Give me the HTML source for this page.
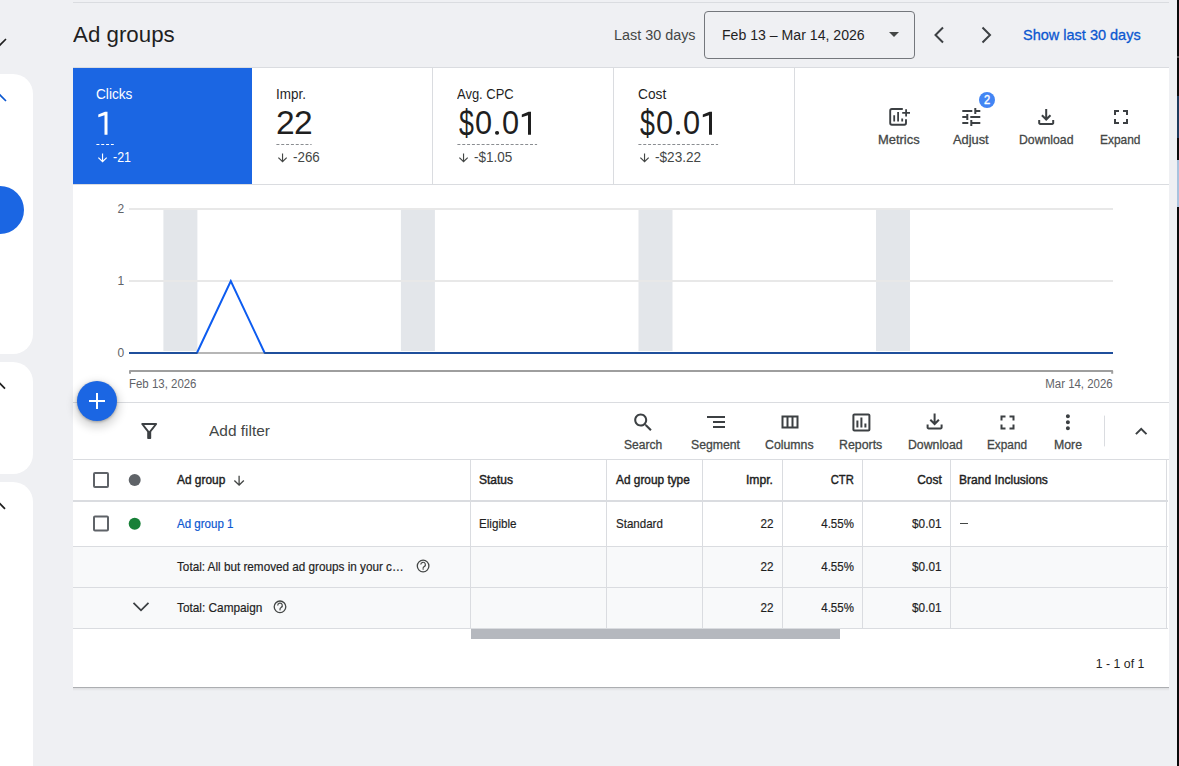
<!DOCTYPE html><html><head><meta charset="utf-8"><style>
*{margin:0;padding:0;box-sizing:border-box}
html,body{width:1179px;height:766px;overflow:hidden;background:#eff0f3;font-family:"Liberation Sans", sans-serif;position:relative}
.t{position:absolute;white-space:nowrap}
.a{position:absolute}
svg{position:absolute;overflow:visible}
</style></head><body>
<div class='a' style='left:-20px;top:74px;width:53px;height:280px;background:#fff;border-radius:20px'></div>
<div class='a' style='left:-20px;top:362px;width:53px;height:112px;background:#fff;border-radius:20px'></div>
<div class='a' style='left:-20px;top:482px;width:53px;height:320px;background:#fff;border-radius:20px'></div>
<div class='a' style='left:-24px;top:186px;width:48px;height:48px;background:#1b66e3;border-radius:50%'></div>
<svg style='left:0;top:0' width='40' height='766'><path d='M-6 39 L0 45 L6 39' fill='none' stroke='#1f1f1f' stroke-width='1.6'/><path d='M-6 101 L0 95 L6 101' fill='none' stroke='#0b57d0' stroke-width='1.6'/><path d='M-5 388.6 L0 383.6 L5 388.6' fill='none' stroke='#1f1f1f' stroke-width='1.8'/><path d='M-5 508.8 L0 503.8 L5 508.8' fill='none' stroke='#1f1f1f' stroke-width='1.8'/></svg>
<div class='a' style='left:1177px;top:0;width:2px;height:766px;background:#0a0a0a'></div>
<div class='a' style='left:1177px;top:56px;width:2px;height:2px;background:#555'></div>
<div class='a' style='left:1177px;top:96px;width:2px;height:42px;background:#1d3a5c'></div>
<div class='a' style='left:1177px;top:160px;width:2px;height:47px;background:#a9c3de'></div>
<div class='a' style='left:73px;top:2px;width:1096px;height:1px;background:#dadce0'></div>
<div class='t' style='left:73.00px;transform-origin:0 0;top:23.88px;font-size:22px;line-height:22px;color:#1f1f1f;font-weight:400;transform:scaleX(1.0140);'>Ad groups</div>
<div class='t' style='left:614.00px;transform-origin:0 0;top:28.45px;font-size:14px;line-height:14px;color:#444746;font-weight:400;transform:scaleX(1.0266);'>Last 30 days</div>
<div class='a' style='left:704px;top:11px;width:211px;height:48px;border:1px solid #74777c;border-radius:4px'></div>
<div class='t' style='left:722.00px;transform-origin:0 0;top:28.45px;font-size:14px;line-height:14px;color:#1f1f1f;font-weight:400;transform:scaleX(1.0074);'>Feb 13 – Mar 14, 2026</div>
<svg style='left:889px;top:32px' width='10' height='5'><path d='M0 0H10L5 5Z' fill='#444746'/></svg>
<svg style='left:930px;top:25px' width='70' height='20'><path d='M13 2.5 L5.5 10 L13 17.5' fill='none' stroke='#3c4043' stroke-width='2'/><path d='M52.5 2.5 L60 10 L52.5 17.5' fill='none' stroke='#3c4043' stroke-width='2'/></svg>
<div class='t' style='left:1022.80px;transform-origin:0 0;top:28.13px;font-size:14.5px;line-height:14.5px;color:#0b57d0;font-weight:400;transform:scaleX(1.0001);-webkit-text-stroke:0.3px #0b57d0'>Show last 30 days</div>
<div class='a' style='left:73px;top:67px;width:1096px;height:620px;background:#fff;'></div>
<div class='a' style='left:73px;top:687px;width:1096px;height:1px;background:#acaeb1'></div><div class='a' style='left:73px;top:688px;width:1096px;height:3px;background:linear-gradient(rgba(0,0,0,.08),rgba(0,0,0,0))'></div>
<div class='a' style='left:73px;top:67px;width:1096px;height:1px;background:#dadce0'></div>
<div class='a' style='left:73px;top:184px;width:1096px;height:1px;background:#dadce0'></div>
<div class='a' style='left:432px;top:67px;width:1px;height:118px;background:#dadce0'></div>
<div class='a' style='left:613px;top:67px;width:1px;height:118px;background:#dadce0'></div>
<div class='a' style='left:794px;top:67px;width:1px;height:118px;background:#dadce0'></div>
<div class='a' style='left:73px;top:68px;width:179px;height:116px;background:#1b66e3'></div>
<div class='t' style='left:96.00px;transform-origin:0 0;top:86.75px;font-size:14px;line-height:14px;color:#fff;font-weight:400;transform:scaleX(0.9747);'>Clicks</div>
<svg style='left:0;top:0' width='200' height='200'><path d='M107.5 111.8V134.7H104.5V115.3L98.3 117.2V114.5L105 111.8Z' fill='#fff'/></svg>
<svg style='left:96px;top:143px' width='17.8' height='3'><line x1='0.4' x2='17.8' y1='1.5' y2='1.5' stroke='#fff' stroke-width='1' stroke-dasharray='3 1.84'/></svg>
<svg style='left:0;top:0' width='800' height='200'><path transform='translate(95.7 151.1) scale(0.57)' d='M20 12l-1.41-1.41L13 16.17V4h-2v12.17l-5.58-5.59L4 12l8 8 8-8z' fill='#fff'/></svg>
<div class='t' style='left:113.00px;transform-origin:0 0;top:150.45px;font-size:14px;line-height:14px;color:#fff;font-weight:400;transform:scaleX(0.8896);'>-21</div>
<div class='t' style='left:276.00px;transform-origin:0 0;top:86.75px;font-size:14px;line-height:14px;color:#1f1f1f;font-weight:400;transform:scaleX(0.9606);'>Impr.</div>
<div class='t' style='left:275.82px;top:107.20px;font-size:32.6px;line-height:32.6px;color:#1f1f1f;transform:scaleX(1.0315);transform-origin:0 0'>2</div>
<div class='t' style='left:293.82px;top:107.20px;font-size:32.6px;line-height:32.6px;color:#1f1f1f;transform:scaleX(1.0315);transform-origin:0 0'>2</div>
<svg style='left:276px;top:143px' width='35.6' height='3'><line x1='0.4' x2='35.6' y1='1.5' y2='1.5' stroke='#8a8d91' stroke-width='1' stroke-dasharray='3 1.84'/></svg>
<svg style='left:0;top:0' width='800' height='200'><path transform='translate(275.7 151.1) scale(0.57)' d='M20 12l-1.41-1.41L13 16.17V4h-2v12.17l-5.58-5.59L4 12l8 8 8-8z' fill='#444746'/></svg>
<div class='t' style='left:293.00px;transform-origin:0 0;top:150.45px;font-size:14px;line-height:14px;color:#444746;font-weight:400;transform:scaleX(0.9561);'>-266</div>
<div class='t' style='left:457.00px;transform-origin:0 0;top:86.75px;font-size:14px;line-height:14px;color:#1f1f1f;font-weight:400;transform:scaleX(0.9262);'>Avg. CPC</div>
<div class='t' style='left:458.63px;top:106.13px;font-size:36.7px;line-height:36.7px;color:#1f1f1f;transform:scaleX(0.7300);transform-origin:0 0'>$</div>
<div class='t' style='left:475.27px;top:107.33px;font-size:32.8px;line-height:32.8px;color:#1f1f1f;transform:scaleX(0.9371);transform-origin:0 0'>0</div>
<div class='t' style='left:501.77px;top:107.33px;font-size:32.8px;line-height:32.8px;color:#1f1f1f;transform:scaleX(0.9371);transform-origin:0 0'>0</div>
<svg style='left:0;top:0' width='800' height='200'><rect x='495.0' y='131' width='4.1' height='3.8' rx='1.8' fill='#1f1f1f'/><path transform='translate(423.5 0)' d='M107.5 111.8V134.7H104.5V115.3L98.3 117.2V114.5L105 111.8Z' fill='#1f1f1f'/></svg>
<svg style='left:457px;top:143px' width='80.1' height='3'><line x1='0.4' x2='80.1' y1='1.5' y2='1.5' stroke='#8a8d91' stroke-width='1' stroke-dasharray='3 1.84'/></svg>
<svg style='left:0;top:0' width='800' height='200'><path transform='translate(456.7 151.1) scale(0.57)' d='M20 12l-1.41-1.41L13 16.17V4h-2v12.17l-5.58-5.59L4 12l8 8 8-8z' fill='#444746'/></svg>
<div class='t' style='left:474.00px;transform-origin:0 0;top:150.45px;font-size:14px;line-height:14px;color:#444746;font-weight:400;transform:scaleX(0.9647);'>-$1.05</div>
<div class='t' style='left:638.00px;transform-origin:0 0;top:86.75px;font-size:14px;line-height:14px;color:#1f1f1f;font-weight:400;transform:scaleX(0.9793);'>Cost</div>
<div class='t' style='left:639.63px;top:106.13px;font-size:36.7px;line-height:36.7px;color:#1f1f1f;transform:scaleX(0.7300);transform-origin:0 0'>$</div>
<div class='t' style='left:656.27px;top:107.33px;font-size:32.8px;line-height:32.8px;color:#1f1f1f;transform:scaleX(0.9371);transform-origin:0 0'>0</div>
<div class='t' style='left:682.77px;top:107.33px;font-size:32.8px;line-height:32.8px;color:#1f1f1f;transform:scaleX(0.9371);transform-origin:0 0'>0</div>
<svg style='left:0;top:0' width='800' height='200'><rect x='676.0' y='131' width='4.1' height='3.8' rx='1.8' fill='#1f1f1f'/><path transform='translate(604.5 0)' d='M107.5 111.8V134.7H104.5V115.3L98.3 117.2V114.5L105 111.8Z' fill='#1f1f1f'/></svg>
<svg style='left:638px;top:143px' width='80.1' height='3'><line x1='0.4' x2='80.1' y1='1.5' y2='1.5' stroke='#8a8d91' stroke-width='1' stroke-dasharray='3 1.84'/></svg>
<svg style='left:0;top:0' width='800' height='200'><path transform='translate(637.7 151.1) scale(0.57)' d='M20 12l-1.41-1.41L13 16.17V4h-2v12.17l-5.58-5.59L4 12l8 8 8-8z' fill='#444746'/></svg>
<div class='t' style='left:655.00px;transform-origin:0 0;top:150.45px;font-size:14px;line-height:14px;color:#444746;font-weight:400;transform:scaleX(0.9708);'>-$23.22</div>
<svg style='left:0;top:0' width='1179' height='200'><path d='M902.8 109 H891.9 Q890.2 109 890.2 110.7 V123.1 Q890.2 124.8 891.9 124.8 H904.3 Q906 124.8 906 123.1 V119.2' fill='none' stroke='#3c4043' stroke-width='1.9'/><path d='M894.2 115.3V121.5 M898.1 112.1V121.5 M902.2 118.4V121.5 M902.2 112.9H910 M906.1 109.2V116.6' fill='none' stroke='#3c4043' stroke-width='1.8'/><path transform='translate(959.3 104.9) scale(1.0)' d='M3 17v2h6v-2H3zM3 5v2h10V5H3zm10 16v-2h8v-2h-8v-2h-2v6h2zM7 9v2H3v2h4v2h2V9H7zm14 4v-2H11v2h10zm-6-4h2V7h4V5h-4V3h-2v6z' fill='#3c4043'/><path transform='translate(1034.2 104.9) scale(1.0)' d='M12 16 7 11l1.4-1.45 2.6 2.6V4h2v8.15l2.6-2.6L17 11zm-6 4q-.825 0-1.412-.587Q4 18.825 4 18v-3h2v3h12v-3h2v3q0 .825-.587 1.413Q18.825 20 18 20z' fill='#3c4043'/><path transform='translate(1109 105) scale(1.0)' d='M7 14H5v5h5v-2H7v-3zm-2-4h2V7h3V5H5v5zm12 7h-3v2h5v-5h-2v3zM14 5v2h3v3h2V5h-5z' fill='#3c4043'/></svg>
<div class='a' style='left:979.3px;top:91.75px;width:16px;height:16px;border-radius:50%;background:#4285f4'></div>
<div class='t' style='left:984.20px;transform-origin:0 0;top:94.14px;font-size:12px;line-height:12px;color:#fff;font-weight:400;transform:scaleX(0.9271);-webkit-text-stroke:0.4px #fff'>2</div>
<div class='t' style='left:878.30px;transform-origin:0 0;top:133.20px;font-size:13px;line-height:13px;color:#444746;font-weight:400;transform:scaleX(0.9931);-webkit-text-stroke:0.3px currentColor;'>Metrics</div>
<div class='t' style='left:953.10px;transform-origin:0 0;top:133.20px;font-size:13px;line-height:13px;color:#444746;font-weight:400;transform:scaleX(0.9878);-webkit-text-stroke:0.3px currentColor;'>Adjust</div>
<div class='t' style='left:1018.50px;transform-origin:0 0;top:133.20px;font-size:13px;line-height:13px;color:#444746;font-weight:400;transform:scaleX(0.9424);-webkit-text-stroke:0.3px currentColor;'>Download</div>
<div class='t' style='left:1100.40px;transform-origin:0 0;top:133.20px;font-size:13px;line-height:13px;color:#444746;font-weight:400;transform:scaleX(0.9162);-webkit-text-stroke:0.3px currentColor;'>Expand</div>
<svg style='left:0;top:0' width='1179' height='766'><rect x='163.4' y='210' width='34' height='141' fill='#e3e6ea'/><rect x='400.9' y='210' width='34' height='141' fill='#e3e6ea'/><rect x='638.5' y='210' width='34' height='141' fill='#e3e6ea'/><rect x='876.0' y='210' width='34' height='141' fill='#e3e6ea'/><rect x='129' y='208' width='984' height='2' fill='#e8e8e8'/><rect x='129' y='280' width='984' height='2' fill='#e8e8e8'/><line x1='129' x2='1113' y1='353' y2='353' stroke='#9e9e9e' stroke-width='1.6'/><path d='M130 373.8 V371 H1112.2 V373.8' fill='none' stroke='#9e9e9e' stroke-width='2' stroke-linejoin='round'/><polyline points='196.9,353 230.8,281 264.7,353' fill='none' stroke='#0d5cf0' stroke-width='2' stroke-linejoin='miter'/><path d='M129 353 H197.4 M264.2 353 H1113' fill='none' stroke='#1f4f9c' stroke-width='2'/></svg>
<div class='t' style='left:117.60px;transform-origin:0 0;top:202.84px;font-size:12px;line-height:12px;color:#5f6368;font-weight:400;'>2</div>
<div class='t' style='left:117.60px;transform-origin:0 0;top:274.84px;font-size:12px;line-height:12px;color:#5f6368;font-weight:400;'>1</div>
<div class='t' style='left:117.60px;transform-origin:0 0;top:346.84px;font-size:12px;line-height:12px;color:#5f6368;font-weight:400;'>0</div>
<div class='t' style='left:128.70px;transform-origin:0 0;top:377.54px;font-size:12px;line-height:12px;color:#5f6368;font-weight:400;transform:scaleX(0.9543);'>Feb 13, 2026</div>
<div class='t' style='right:66.00px;transform-origin:100% 0;top:377.54px;font-size:12px;line-height:12px;color:#5f6368;font-weight:400;transform:scaleX(0.9545);'>Mar 14, 2026</div>
<div class='a' style='left:73px;top:402px;width:1096px;height:1px;background:#dadce0'></div>
<div class='a' style='left:73px;top:459px;width:1096px;height:1px;background:#dadce0'></div>
<div class='a' style='left:77px;top:381px;width:40px;height:40px;border-radius:50%;background:#1b66e3;box-shadow:0 1px 3px rgba(0,0,0,.3),0 4px 8px 3px rgba(0,0,0,.15)'></div>
<svg style='left:0;top:0' width='1179' height='766'><path d='M89 401H105 M97 393V409' stroke='#fff' stroke-width='2'/><path transform='translate(137.2 419) scale(1.0)' d='M7 6h10l-5.01 6.3L7 6zm-2.75-.39C6.27 8.2 10 13 10 13v6c0 .55.45 1 1 1h2c.55 0 1-.45 1-1v-6s3.72-4.8 5.74-7.39c.51-.66.04-1.61-.79-1.61H5.04c-.83 0-1.3.95-.79 1.61z' fill='#3c4043'/><path transform='translate(631.2 410.5) scale(1.0)' d='M15.5 14h-.79l-.28-.27C15.41 12.59 16 11.11 16 9.5 16 5.91 13.09 3 9.5 3S3 5.910 3 9.5 5.91 16 9.5 16c1.61 0 3.09-.59 4.23-1.57l.27.28v.79l5 4.99L20.49 19l-4.99-5zm-6 0C7.01 14 5 11.99 5 9.5S7.01 5 9.5 5 14 7.01 14 9.5 11.99 14 9.5 14z' fill='#3c4043'/><path transform='translate(704 410.1) scale(1.0)' d='M9 18h12v-2H9v2zM3 6v2h18V6H3zm6 7h12v-2H9v2z' fill='#3c4043'/><path transform='translate(777.5 410.5) scale(1.0)' d='M4 5v13h17V5H4zm10 2v9h-3V7h3zM6 7h3v9H6V7zm13 9h-3V7h3v9z' fill='#3c4043'/><path transform='translate(849.4 410.4) scale(1.0)' d='M9 17H7v-7h2v7zm4 0h-2V7h2v10zm4 0h-2v-4h2v4zm2 2H5V5h14v14zm0-16H5c-1.1 0-2 .9-2 2v14c0 1.1.9 2 2 2h14c1.1 0 2-.9 2-2V5c0-1.1-.9-2-2-2z' fill='#3c4043'/><path transform='translate(922.6 409.4) scale(1.0)' d='M12 16 7 11l1.4-1.45 2.6 2.6V4h2v8.15l2.6-2.6L17 11zm-6 4q-.825 0-1.412-.587Q4 18.825 4 18v-3h2v3h12v-3h2v3q0 .825-.587 1.413Q18.825 20 18 20z' fill='#3c4043'/><path transform='translate(995.5 410.5) scale(1.0)' d='M7 14H5v5h5v-2H7v-3zm-2-4h2V7h3V5H5v5zm12 7h-3v2h5v-5h-2v3zM14 5v2h3v3h2V5h-5z' fill='#3c4043'/><path transform='translate(1055.9 410.2) scale(1.0)' d='M12 8c1.1 0 2-.9 2-2s-.9-2-2-2-2 .9-2 2 .9 2 2 2zm0 2c-1.1 0-2 .9-2 2s.9 2 2 2 2-.9 2-2-.9-2-2-2zm0 6c-1.1 0-2 .9-2 2s.9 2 2 2 2-.9 2-2-.9-2-2-2z' fill='#3c4043'/><path d='M1104.5 415.6V446.4' stroke='#dadce0' stroke-width='1'/><path transform='translate(1129.2 419.4) scale(1.0)' d='M12 8l-6 6 1.41 1.41L12 10.83l4.59 4.58L18 14z' fill='#3c4043'/></svg>
<div class='t' style='left:208.90px;transform-origin:0 0;top:423.30px;font-size:15px;line-height:15px;color:#444746;font-weight:400;transform:scaleX(1.0304);'>Add filter</div>
<div class='t' style='left:624.00px;transform-origin:0 0;top:439.22px;font-size:12.5px;line-height:12.5px;color:#444746;font-weight:400;transform:scaleX(0.9644);-webkit-text-stroke:0.3px currentColor;'>Search</div>
<div class='t' style='left:691.20px;transform-origin:0 0;top:439.22px;font-size:12.5px;line-height:12.5px;color:#444746;font-weight:400;transform:scaleX(0.9794);-webkit-text-stroke:0.3px currentColor;'>Segment</div>
<div class='t' style='left:765.20px;transform-origin:0 0;top:439.22px;font-size:12.5px;line-height:12.5px;color:#444746;font-weight:400;transform:scaleX(0.9852);-webkit-text-stroke:0.3px currentColor;'>Columns</div>
<div class='t' style='left:839.00px;transform-origin:0 0;top:439.22px;font-size:12.5px;line-height:12.5px;color:#444746;font-weight:400;transform:scaleX(0.9890);-webkit-text-stroke:0.3px currentColor;'>Reports</div>
<div class='t' style='left:907.50px;transform-origin:0 0;top:439.22px;font-size:12.5px;line-height:12.5px;color:#444746;font-weight:400;transform:scaleX(0.9821);-webkit-text-stroke:0.3px currentColor;'>Download</div>
<div class='t' style='left:987.30px;transform-origin:0 0;top:439.22px;font-size:12.5px;line-height:12.5px;color:#444746;font-weight:400;transform:scaleX(0.9433);-webkit-text-stroke:0.3px currentColor;'>Expand</div>
<div class='t' style='left:1053.90px;transform-origin:0 0;top:439.22px;font-size:12.5px;line-height:12.5px;color:#444746;font-weight:400;transform:scaleX(0.9830);-webkit-text-stroke:0.3px currentColor;'>More</div>
<div class='a' style='left:73px;top:546px;width:1094px;height:82px;background:#f8f9fa'></div>
<div class='a' style='left:73px;top:500px;width:1095px;height:2px;background:#dadce0'></div>
<div class='a' style='left:73px;top:546px;width:1095px;height:1px;background:#dadce0'></div>
<div class='a' style='left:73px;top:587px;width:1095px;height:1px;background:#dadce0'></div>
<div class='a' style='left:73px;top:628px;width:1095px;height:1px;background:#dadce0'></div>
<div class='a' style='left:470px;top:459px;width:1px;height:169px;background:#dadce0'></div>
<div class='a' style='left:606px;top:459px;width:1px;height:169px;background:#dadce0'></div>
<div class='a' style='left:702px;top:459px;width:1px;height:169px;background:#dadce0'></div>
<div class='a' style='left:782px;top:459px;width:1px;height:169px;background:#dadce0'></div>
<div class='a' style='left:862px;top:459px;width:1px;height:169px;background:#dadce0'></div>
<div class='a' style='left:950px;top:459px;width:1px;height:169px;background:#dadce0'></div>
<div class='a' style='left:1166px;top:459px;width:1px;height:169px;background:#dadce0'></div>
<svg style='left:0;top:0' width='1179' height='766'><rect x='94' y='473' width='14' height='14' rx='1' fill='none' stroke='#5f6368' stroke-width='2'/><rect x='94' y='516.5' width='14' height='14' rx='1' fill='none' stroke='#5f6368' stroke-width='2'/><circle cx='134.7' cy='480' r='6' fill='#5f6368'/><circle cx='134.7' cy='523.8' r='6' fill='#188038'/><path transform='translate(231.3 473.1) scale(0.65)' d='M20 12l-1.41-1.41L13 16.17V4h-2v12.17l-5.58-5.59L4 12l8 8 8-8z' fill='#444746'/><path d='M133.5 602.8L141 610.3L148.5 602.8' fill='none' stroke='#3c4043' stroke-width='1.8'/><circle cx='423.1' cy='566' r='5.8' fill='none' stroke='#444746' stroke-width='1.3'/><circle cx='280' cy='606.8' r='5.8' fill='none' stroke='#444746' stroke-width='1.3'/></svg>
<svg style='left:0;top:0' width='1179' height='766'><path d='M420.8 564.6 a2.3 2.3 0 1 1 3.4 2 c-0.75 0.45 -1.1 0.8 -1.1 1.7' fill='none' stroke='#444746' stroke-width='1.2'/><circle cx='423.1' cy='569.0' r='0.75' fill='#444746'/><path d='M277.7 605.4 a2.3 2.3 0 1 1 3.4 2 c-0.75 0.45 -1.1 0.8 -1.1 1.7' fill='none' stroke='#444746' stroke-width='1.2'/><circle cx='280.0' cy='609.8' r='0.75' fill='#444746'/></svg>
<div class='t' style='left:177.40px;transform-origin:0 0;top:473.40px;font-size:13px;line-height:13px;color:#1f1f1f;font-weight:400;transform:scaleX(0.9154);-webkit-text-stroke:0.45px currentColor;'>Ad group</div>
<div class='t' style='left:479.40px;transform-origin:0 0;top:473.40px;font-size:13px;line-height:13px;color:#1f1f1f;font-weight:400;transform:scaleX(0.9224);-webkit-text-stroke:0.45px currentColor;'>Status</div>
<div class='t' style='left:615.50px;transform-origin:0 0;top:473.40px;font-size:13px;line-height:13px;color:#1f1f1f;font-weight:400;transform:scaleX(0.9116);-webkit-text-stroke:0.45px currentColor;'>Ad group type</div>
<div class='t' style='right:405.80px;transform-origin:100% 0;top:473.40px;font-size:13px;line-height:13px;color:#1f1f1f;font-weight:400;transform:scaleX(0.9341);-webkit-text-stroke:0.45px currentColor;'>Impr.</div>
<div class='t' style='right:325.30px;transform-origin:100% 0;top:473.40px;font-size:13px;line-height:13px;color:#1f1f1f;font-weight:400;transform:scaleX(0.8608);-webkit-text-stroke:0.45px currentColor;'>CTR</div>
<div class='t' style='right:237.10px;transform-origin:100% 0;top:473.40px;font-size:13px;line-height:13px;color:#1f1f1f;font-weight:400;transform:scaleX(0.9164);-webkit-text-stroke:0.45px currentColor;'>Cost</div>
<div class='t' style='left:959.30px;transform-origin:0 0;top:473.40px;font-size:13px;line-height:13px;color:#1f1f1f;font-weight:400;transform:scaleX(0.9248);-webkit-text-stroke:0.45px currentColor;'>Brand Inclusions</div>
<div class='t' style='left:177.40px;transform-origin:0 0;top:517.30px;font-size:13px;line-height:13px;color:#0b57d0;font-weight:400;transform:scaleX(0.8882);-webkit-text-stroke:0.2px currentColor;'>Ad group 1</div>
<div class='t' style='left:479.40px;transform-origin:0 0;top:517.30px;font-size:13px;line-height:13px;color:#1f1f1f;font-weight:400;transform:scaleX(0.8945);-webkit-text-stroke:0.2px currentColor;'>Eligible</div>
<div class='t' style='left:615.50px;transform-origin:0 0;top:517.30px;font-size:13px;line-height:13px;color:#1f1f1f;font-weight:400;transform:scaleX(0.8888);-webkit-text-stroke:0.2px currentColor;'>Standard</div>
<div class='t' style='right:405.80px;transform-origin:100% 0;top:517.30px;font-size:13px;line-height:13px;color:#1f1f1f;font-weight:400;transform:scaleX(0.8985);-webkit-text-stroke:0.2px currentColor;'>22</div>
<div class='t' style='right:325.30px;transform-origin:100% 0;top:517.30px;font-size:13px;line-height:13px;color:#1f1f1f;font-weight:400;transform:scaleX(0.8841);-webkit-text-stroke:0.2px currentColor;'>4.55%</div>
<div class='t' style='right:237.10px;transform-origin:100% 0;top:517.30px;font-size:13px;line-height:13px;color:#1f1f1f;font-weight:400;transform:scaleX(0.9064);-webkit-text-stroke:0.2px currentColor;'>$0.01</div>
<div class='t' style='right:405.80px;transform-origin:100% 0;top:560.00px;font-size:13px;line-height:13px;color:#1f1f1f;font-weight:400;transform:scaleX(0.8985);-webkit-text-stroke:0.2px currentColor;'>22</div>
<div class='t' style='right:325.30px;transform-origin:100% 0;top:560.00px;font-size:13px;line-height:13px;color:#1f1f1f;font-weight:400;transform:scaleX(0.8841);-webkit-text-stroke:0.2px currentColor;'>4.55%</div>
<div class='t' style='right:237.10px;transform-origin:100% 0;top:560.00px;font-size:13px;line-height:13px;color:#1f1f1f;font-weight:400;transform:scaleX(0.9064);-webkit-text-stroke:0.2px currentColor;'>$0.01</div>
<div class='t' style='right:405.80px;transform-origin:100% 0;top:600.80px;font-size:13px;line-height:13px;color:#1f1f1f;font-weight:400;transform:scaleX(0.8985);-webkit-text-stroke:0.2px currentColor;'>22</div>
<div class='t' style='right:325.30px;transform-origin:100% 0;top:600.80px;font-size:13px;line-height:13px;color:#1f1f1f;font-weight:400;transform:scaleX(0.8841);-webkit-text-stroke:0.2px currentColor;'>4.55%</div>
<div class='t' style='right:237.10px;transform-origin:100% 0;top:600.80px;font-size:13px;line-height:13px;color:#1f1f1f;font-weight:400;transform:scaleX(0.9064);-webkit-text-stroke:0.2px currentColor;'>$0.01</div>
<div class='a' style='left:960px;top:523px;width:8px;height:1px;background:#444746'></div>
<div class='t' style='left:177.00px;transform-origin:0 0;top:560.00px;font-size:13px;line-height:13px;color:#1f1f1f;font-weight:400;transform:scaleX(0.9015);-webkit-text-stroke:0.2px currentColor;'>Total: All but removed ad groups in your c…</div>
<div class='t' style='left:177.00px;transform-origin:0 0;top:600.80px;font-size:13px;line-height:13px;color:#1f1f1f;font-weight:400;transform:scaleX(0.9090);-webkit-text-stroke:0.2px currentColor;'>Total: Campaign</div>
<div class='a' style='left:471px;top:629px;width:369px;height:10px;background:#b5b8be'></div>
<div class='t' style='right:35.20px;transform-origin:100% 0;top:656.80px;font-size:13px;line-height:13px;color:#1f1f1f;font-weight:400;transform:scaleX(0.9452);'>1 - 1 of 1</div>
</body></html>
